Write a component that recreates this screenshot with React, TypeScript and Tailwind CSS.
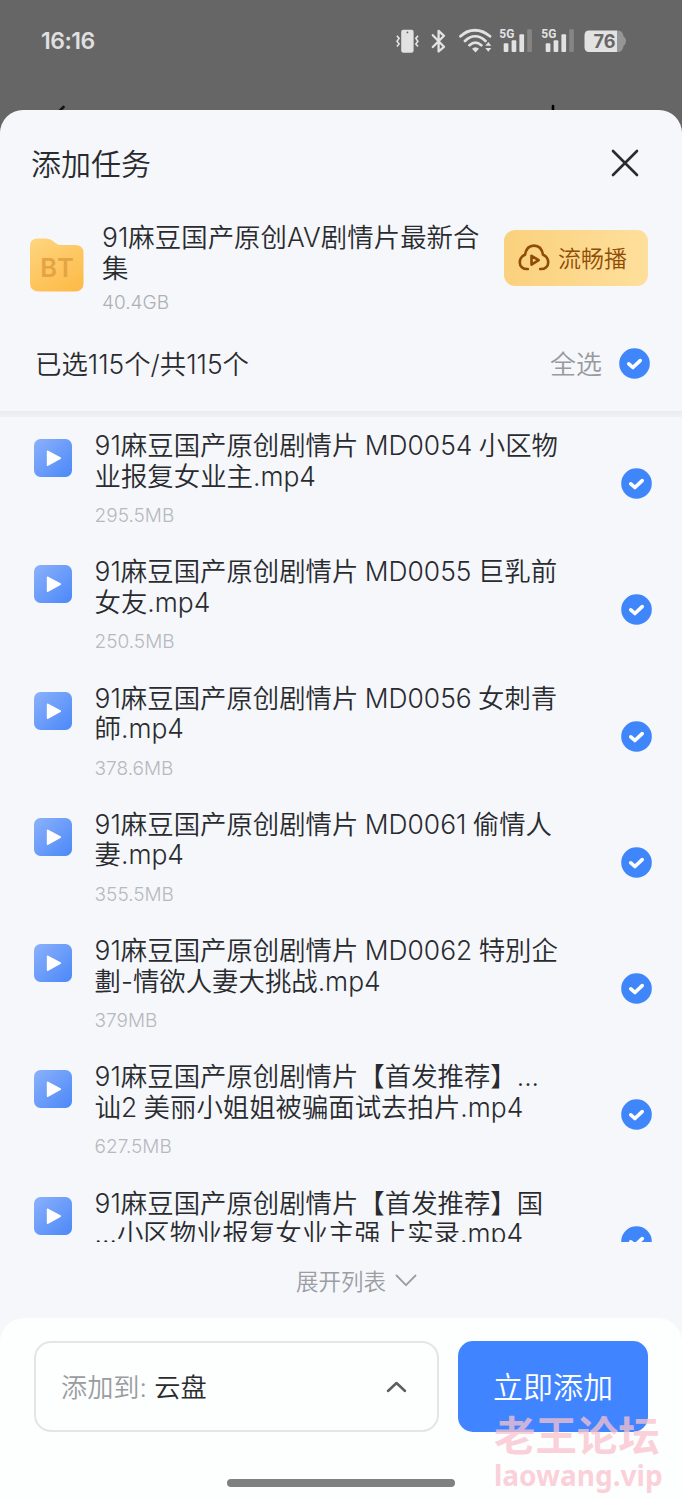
import React from "react";

type FileItem = { lines: [string, string]; size?: string };

const files: FileItem[] = [
  { lines: ["91麻豆国产原创剧情片 MD0054 小区物", "业报复女业主.mp4"], size: "295.5MB" },
  { lines: ["91麻豆国产原创剧情片 MD0055 巨乳前", "女友.mp4"], size: "250.5MB" },
  { lines: ["91麻豆国产原创剧情片 MD0056 女刺青", "師.mp4"], size: "378.6MB" },
  { lines: ["91麻豆国产原创剧情片 MD0061 偷情人", "妻.mp4"], size: "355.5MB" },
  { lines: ["91麻豆国产原创剧情片 MD0062 特別企", "劃-情欲人妻大挑战.mp4"], size: "379MB" },
  { lines: ["91麻豆国产原创剧情片【首发推荐】...", "讪2 美丽小姐姐被骗面试去拍片.mp4"], size: "627.5MB" },
  { lines: ["91麻豆国产原创剧情片【首发推荐】国", "...小区物业报复女业主强上实录.mp4"] },
];

function Check() {
  return (
    <svg className="block size-[31px] shrink-0" viewBox="0 0 31 31" fill="none">
      <circle cx="15.5" cy="15.5" r="15.3" fill="#4086fb" />
      <path d="M9.8 15.8 L13.9 19.5 L21.2 12.6" stroke="#fff" strokeWidth="3.6" strokeLinecap="round" strokeLinejoin="round" />
    </svg>
  );
}

function VideoIcon() {
  return (
    <svg className="block size-[38px] shrink-0" viewBox="0 0 38 38">
      <defs>
        <linearGradient id="video" x1="0" y1="0" x2="1" y2="1">
          <stop offset="0" stopColor="#8bb1fb" />
          <stop offset="1" stopColor="#4b88f8" />
        </linearGradient>
      </defs>
      <rect width="38" height="38" rx="6.5" fill="url(#video)" />
      <path d="M13.8 12.6 L26 19.2 L13.8 26 Z" fill="#fff" stroke="#fff" strokeWidth="2" strokeLinejoin="round" />
    </svg>
  );
}

function Signal() {
  return (
    <svg className="block h-[28px] w-[34px]" viewBox="0 0 34 28">
      <text x="0.3" y="11.2" fontFamily="Roboto" fontWeight="700" fontSize="13.5" fill="#e2e2e2" textLength="15" lengthAdjust="spacingAndGlyphs">5G</text>
      <rect x="4.7" y="16.3" width="4.7" height="8.7" rx="1" fill="#e2e2e2" />
      <rect x="12.6" y="13.3" width="4.7" height="11.7" rx="1" fill="#e2e2e2" />
      <rect x="20.4" y="7.3" width="4.7" height="17.7" rx="1" fill="#e2e2e2" />
      <rect x="28.2" y="2.2" width="4.7" height="22.8" rx="1" fill="#858585" />
    </svg>
  );
}

function StatusBar() {
  return (
    <header className="flex h-[82px] items-center justify-between pl-[41px] pr-[55px]">
      <time className="font-[Inter] text-[23px] font-semibold tracking-[-0.5px] text-[#e0e0e0]">16:16</time>
      <div className="flex items-center">
        <svg className="h-[28px] w-[25px]" viewBox="0 0 25 28" fill="none">
          <rect x="5.2" y="2.7" width="12.4" height="23" rx="2.2" fill="#e2e2e2" />
          <circle cx="11.4" cy="5.4" r="0.9" fill="#666" />
          <path d="M0.9 8.8 L3.1 11.4 L1 14.2 L3.1 17 L0.9 19.6 M22 8.8 L19.8 11.4 L21.9 14.2 L19.8 17 L22 19.6" stroke="#e2e2e2" strokeWidth="1.6" />
        </svg>
        <svg className="ml-[9px] h-[28px] w-[18px]" viewBox="0 0 18 28" fill="none">
          <path d="M2.8 8.2 L14 19.8 L8.6 24.5 V3.8 L14 8.8 L2.8 20" stroke="#e2e2e2" strokeWidth="2.3" strokeLinejoin="round" strokeLinecap="round" />
        </svg>
        <svg className="ml-[11px] h-[28px] w-[34px]" viewBox="0 0 34 28" fill="none">
          <path d="M1.5 9.3 C10 1.2 21.5 1.2 31 9.3 M6 13.9 C12.4 7.8 20 7.8 26.5 13.9 M10.5 18.2 C14.3 14.9 18.5 14.9 22.3 18.2" stroke="#e2e2e2" strokeWidth="2.8" strokeLinecap="round" />
          <path d="M13 21.8 Q16.5 18.5 20 21.8 L16.5 25.5 Z M26.3 18.8 L29.3 15 L32.3 18.8 Z M26.3 21 H32.3 L29.3 24.8 Z" fill="#e2e2e2" />
        </svg>
        <div className="ml-[6px]"><Signal /></div>
        <div className="ml-[8px]"><Signal /></div>
        <svg className="ml-[9px] h-[28px] w-[43px]" viewBox="0 0 43 28">
          <path d="M33 3.5 H34 Q39 3.5 39.5 9.5 Q42 10.5 42 14 Q42 17.5 39.5 18.8 Q39 25 34 25 H33 Z" fill="#969696" />
          <path d="M5 3.5 H33 V25 H5 Q0.5 25 0.5 20 V8.5 Q0.5 3.5 5 3.5 Z" fill="#e2e2e2" />
          <text x="9.5" y="21.3" fontFamily="Inter" fontWeight="700" fontSize="19" fill="#666" textLength="22" lengthAdjust="spacingAndGlyphs">76</text>
        </svg>
      </div>
    </header>
  );
}

function FolderIcon() {
  return (
    <svg className="mt-[16px] block h-[54px] w-[54px] shrink-0" viewBox="0 0 54 54">
      <defs>
        <linearGradient id="folder" x1="0.2" y1="0" x2="0.8" y2="1">
          <stop offset="0" stopColor="#fed37b" />
          <stop offset="1" stopColor="#fdbb49" />
        </linearGradient>
      </defs>
      <path d="M0 8 Q0 0.5 8 0.5 H16 Q20 0.5 23 3 L26 5.5 Q28 7 31 7 H45 Q53.5 7 53.5 15 V45 Q53.5 53.5 45 53.5 H9 Q0 53.5 0 45 Z" fill="url(#folder)" />
      <text x="10.2 27" y="39.3" fontFamily="Inter" fontWeight="600" fontSize="25.5" fill="#e5a345">BT</text>
    </svg>
  );
}

function TaskHeader() {
  return (
    <section className="flex h-[301px] shrink-0 flex-col">
      <div className="flex h-[106px] items-center justify-between pl-[31px] pr-[43px]">
        <h1 className="pt-[2px] text-[30px] leading-none">添加任务</h1>
        <svg className="h-7 w-7" viewBox="0 0 28 28" fill="none" stroke="#292b2f" strokeWidth="2.6" strokeLinecap="round">
          <path d="M2 2 L26 26 M26 2 L2 26" />
        </svg>
      </div>
      <div className="flex h-[106px] pl-[30px] pr-[34px] pt-[6px]">
        <FolderIcon />
        <div className="ml-[18px] flex-1 whitespace-nowrap text-[26.4px] leading-[30.5px]">
          <p className="tracking-[0.05px]">91麻豆国产原创AV剧情片最新合</p>
          <p>集</p>
          <p className="mt-[8px] text-[19px] leading-[24px] text-[#adb0b4]">40.4GB</p>
        </div>
        <button className="mt-[8px] flex h-[56px] w-[144px] shrink-0 items-center rounded-[11px] bg-linear-to-r from-[#fad17d] to-[#fedf9b] pl-[14px] text-[23px] text-[#8f4c06]">
          <svg className="h-8 w-8" viewBox="0 0 32 32" fill="none" stroke="#8f4c06" strokeWidth="2.6" strokeLinecap="round" strokeLinejoin="round">
            <path d="M9.8 27 C4.5 27.3 1.8 24 1.8 20.5 C1.8 16.8 4 14 7 12.8 C8 6.8 11.5 3.6 16 3.6 C20.5 3.6 24 6.8 25 12.8 C28 14 30.2 16.8 30.2 20.5 C30.2 24 27.5 27.3 22.2 27" />
            <path d="M13.5 13.8 V22.6 L20.7 18.2 Z" />
          </svg>
          <span className="ml-[8px] pt-[3px]">流畅播</span>
        </button>
      </div>
      <div className="flex h-[83px] items-center pl-[35px] pr-[32px]">
        <span className="pt-[2px] text-[26.4px]">已选115个/共115个</span>
        <span className="ml-auto mr-[17px] pt-[2px] text-[26px] text-[#989a9f]">全选</span>
        <Check />
      </div>
    </section>
  );
}

function FileRow({ file }: { file: FileItem }) {
  return (
    <li className="flex h-[126.3px] shrink-0 pl-[34px] pr-[30px]">
      <div className="pt-[22px]"><VideoIcon /></div>
      <div className="ml-[22.6px] flex-1 whitespace-nowrap pt-[13px] text-[26.4px] leading-[30.5px]">
        <p className="[word-spacing:-1px]">{file.lines[0]}</p>
        <p className="[word-spacing:-1px]">{file.lines[1]}</p>
        {file.size && <p className="mt-[13px] text-[19px] leading-[24px] text-[#b6b9be]">{file.size}</p>}
      </div>
      <div className="pt-[51px]"><Check /></div>
    </li>
  );
}

function ActionBar() {
  return (
    <footer className="h-[182px] shrink-0 rounded-t-[24px] bg-[#fdfefe] pt-[23px]">
      <div className="flex gap-[19px] pl-[34px] pr-[34px]">
        <div className="flex h-[91px] w-[405px] items-center rounded-[17px] border-2 border-[#e4e5e7] pl-[25px] pr-[30px] text-[26.2px]">
          <span className="whitespace-pre pt-[2px] text-[#9a9ca0]">添加到: </span>
          <span className="pt-[2px]">云盘</span>
          <svg className="ml-auto h-[12px] w-[21px]" viewBox="0 0 21 12" fill="none" stroke="#5c5e61" strokeWidth="2.5" strokeLinecap="round" strokeLinejoin="round">
            <path d="M2 10 L10.5 2 L19 10" />
          </svg>
        </div>
        <button className="h-[91px] flex-1 rounded-[15px] bg-[#4085ff] pt-[2px] text-[30px] text-white">立即添加</button>
      </div>
      <div className="mx-auto mt-[47px] h-[8px] w-[228px] rounded-full bg-[#808080]" />
    </footer>
  );
}

export default function App() {
  return (
    <div className="relative flex h-[1500px] w-[682px] flex-col overflow-hidden bg-[#666] font-['Inter','Noto_Sans_CJK_SC',sans-serif] font-[350] text-[#292b2f]">
      <StatusBar />
      <div className="flex h-[28px] shrink-0 items-end">
        <svg className="ml-[57px] h-[5px] w-[9px]" viewBox="0 0 9 5"><path d="M3 5.5 L6.5 2" stroke="#111" strokeWidth="2.6" strokeLinecap="round" /></svg>
        <svg className="ml-[485px] h-[6px] w-[4px]" viewBox="0 0 4 6"><path d="M2 2 V6" stroke="#000" strokeWidth="2.6" strokeLinecap="round" /></svg>
      </div>
      <main className="flex flex-1 flex-col overflow-hidden rounded-t-[23px] bg-[#f5f7fb]">
        <TaskHeader />
        <div className="h-[6px] shrink-0 bg-linear-to-b from-[#eaebee] to-[#f0f1f4]" />
        <ul className="flex h-[825px] shrink-0 flex-col overflow-hidden">
          {files.map((file) => <FileRow key={file.lines.join()} file={file} />)}
        </ul>
        <div className="flex h-[76px] shrink-0 items-center justify-center pl-[31px] text-[22.5px] text-[#9b9da3]">
          <span className="pt-[3px]">展开列表</span>
          <svg className="ml-[9px] h-[13px] w-[22px]" viewBox="0 0 22 13" fill="none" stroke="#9b9da3" strokeWidth="1.8" strokeLinecap="round" strokeLinejoin="round">
            <path d="M1.5 1.5 L11 11.2 L20.5 1.5" />
          </svg>
        </div>
        <ActionBar />
      </main>
      <div className="pointer-events-none absolute left-[494px] top-[1412px] whitespace-nowrap font-['Noto_Sans','Noto_Sans_CJK_SC',sans-serif] font-bold text-[#fac2cd]/75">
        <div className="text-[41.4px] leading-[46px]">老王论坛</div>
        <div className="text-[28px] leading-[34px]">laowang.vip</div>
      </div>
    </div>
  );
}
